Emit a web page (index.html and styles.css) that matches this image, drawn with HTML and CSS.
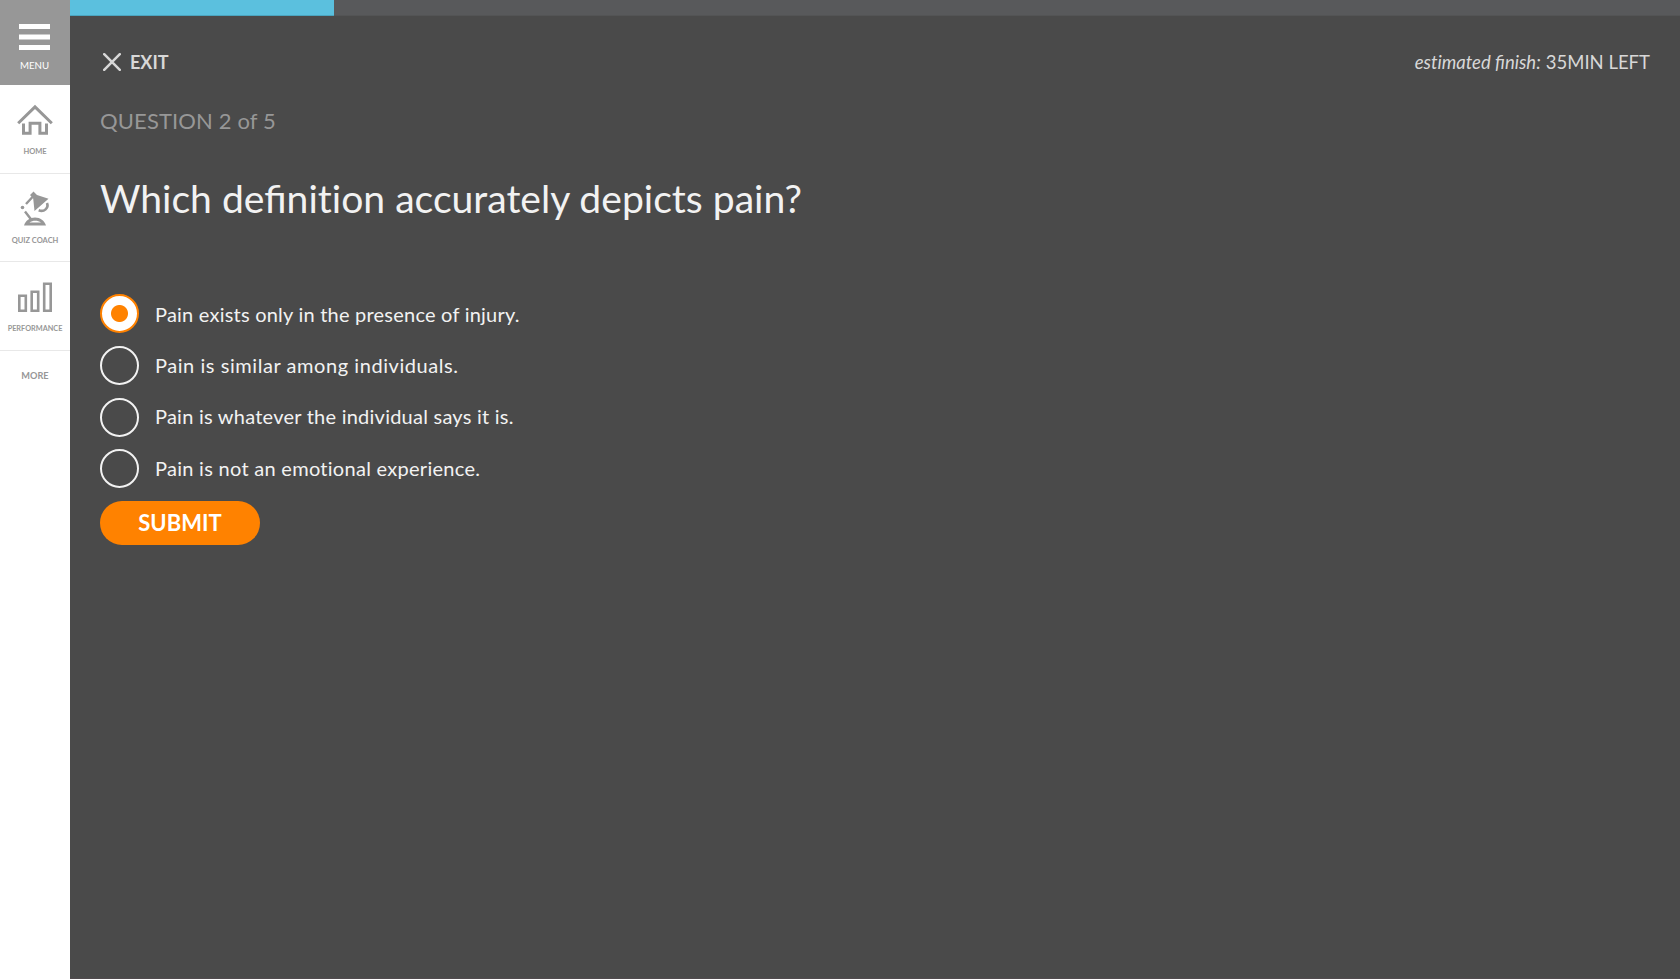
FILE: index.html
```html
<!DOCTYPE html>
<html lang="en">
<head>
<meta charset="utf-8">
<title>Quiz</title>
<link rel="stylesheet" href="styles.css">
</head>
<body>
<div class="app">
  <nav class="sidebar">
    <div class="menu">
      <svg class="menu-icon" width="31" height="27" viewBox="0 0 31 27"><path d="M0 0h31v5H0zM0 10.500h31v5H0zM0 21h31v5H0z" fill="#fff"/></svg>
      <span class="menu-label">MENU</span>
    </div>
    <div class="item">
      <svg class="item-icon" width="36" height="32" viewBox="0 0 36 32" fill="none" stroke="#979797" stroke-width="3"><path d="M1.200 19.300 18 2.900l16.800 16.400"/><path d="M6.500 19.500v9.700h6.600v-9.900h9.800v9.900h6.600v-9.700"/></svg>
      <span class="label home">HOME</span>
    </div>
    <div class="item item-coach">
      <svg class="item-icon" width="36" height="36" viewBox="0 0 36 36" fill="#979797"><path d="m13 4 3.500-3.500L20 4l11.500 3.800L17.500 20l-1.300-12.500z"/><g fill="none" stroke="#979797" stroke-width="2.400"><path d="M15.500 6 9 13M8 20.500l5.800 7.500"/><path d="M30 12c2 5-3 9.500-8.300 7.300" stroke-width="2.600"/></g><circle cx="5.500" cy="16.500" r="1.800"/><path fill-rule="evenodd" d="M7 34.500c1.500-4.800 5.800-8 11-8s9.500 3.200 11 8zM12.500 31.500H24c-3.200-2.300-8.300-2.300-11.500 0z"/></svg>
      <span class="label coach">QUIZ COACH</span>
    </div>
    <div class="item">
      <svg class="item-icon" width="36" height="32" viewBox="0 0 36 32" fill="none" stroke="#979797" stroke-width="2.600"><path d="M2.300 14.800h6.500v15H2.300zM14.700 10.800h6.500v19h-6.500zM27.200 2.800h6.500v27h-6.500z"/></svg>
      <span class="label performance">PERFORMANCE</span>
    </div>
    <div class="more">MORE</div>
  </nav>
  <main class="main">
    <div class="progress"><div class="progress-fill"></div></div>
    <div class="content">
      <header class="top">
        <div class="exit">
          <svg width="18" height="18" viewBox="0 0 18 18" stroke="#d8d8d8" stroke-width="2.500" stroke-linecap="round"><path d="m1.200 1.200 15.600 15.600M16.800 1.200 1.200 16.800"/></svg>
          <span class="exit-label">EXIT</span>
        </div>
        <div class="estimate"><em class="estimate-name">es&zwnj;t&zwnj;imated finish:</em><span class="estimate-time">35MIN LEFT</span></div>
      </header>
      <div class="counter">QUESTION 2 of 5</div>
      <h1 class="question">Which definit&zwnj;ion accurately depicts pain?</h1>
      <div class="options">
        <div class="option"><span class="radio selected"></span><span class="text t1">Pain exists only in the presence of injury.</span></div>
        <div class="option"><span class="radio"></span><span class="text t2">Pain is similar among individuals.</span></div>
        <div class="option"><span class="radio"></span><span class="text t3">Pain is whatever the individual says it is.</span></div>
        <div class="option last"><span class="radio"></span><span class="text t4">Pain is not an emotional experience.</span></div>
      </div>
      <button class="submit">SUBMIT</button>
    </div>
  </main>
</div>
</body>
</html>
```
FILE: styles.css
```css
* { box-sizing: border-box; }
body { margin: 0; font-family: Lato, sans-serif; background: #4a4a4a; white-space: nowrap; }
.app { display: flex; height: 979px; overflow: hidden; }
.sidebar { width: 70px; background: #fff; color: #979797; display: flex; flex-direction: column; }
.menu { height: 85px; background: #979797; display: flex; flex-direction: column; align-items: center; padding: 24px 1px 0 0; color: #fff; }
.menu-label { font-size: 9.700px; line-height: 12px; margin-top: 8px; }
.item { height: 89px; border-bottom: 1px solid #e8e8e8; display: flex; flex-direction: column; align-items: center; padding-top: 19px; }
.item-coach { height: 88px; padding-top: 17px; }
.item-icon { flex: none; }
.label { font-size: 7.500px; line-height: 10px; font-weight: 700; margin-top: 11px; }
.coach { margin-top: 9px; }
.performance { font-size: 7.300px; }
.more { font-size: 9.200px; line-height: 12px; font-weight: 700; text-align: center; margin-top: 19px; }
.main { flex: 1; display: flex; flex-direction: column; border-bottom: 1px solid #514b4e; }
.progress { height: 16px; background: #58595b; border-bottom: 1px solid #535455; }
.progress-fill { width: 264px; height: 16px; background: #5bc0de; border-bottom: 1px solid #4ba5bf; }
.content { padding: 34px 30px 0; display: flex; flex-direction: column; align-items: flex-start; }
.top { align-self: stretch; height: 24px; display: flex; justify-content: space-between; align-items: center; color: #d8d8d8; }
.exit { display: flex; align-items: center; gap: 9px; padding-left: 3px; }
.exit-label { font-size: 18px; line-height: 24px; font-weight: 700; }
.estimate { display: flex; gap: 5px; font-size: 18.500px; line-height: 24px; }
.counter { font-size: 22px; line-height: 30px; letter-spacing: 0.130px; color: #979797; margin-top: 32px; }
.question { font-size: 39.100px; line-height: 50px; font-weight: 400; color: #f2f2f2; margin: 37px 0 0; }
.options { display: flex; flex-direction: column; gap: 13px; margin-top: 71px; }
.option { display: flex; align-items: center; gap: 16px; height: 39px; color: #f2f2f2; }
.option.last { margin-top: -1px; }
.radio { width: 39px; height: 39px; border: 2px solid #f2f2f2; border-radius: 50%; }
.selected { border-color: #ff8200; background: radial-gradient(circle, #ff8200 8px, #fff 9px); }
.text { font-size: 20px; line-height: 39px; }
.t1 { letter-spacing: 0.220px; padding-top: 2px; }
.t2 { letter-spacing: 0.560px; }
.t3 { letter-spacing: 0.240px; padding-bottom: 2px; }
.t4 { letter-spacing: 0.280px; }
.submit { width: 160px; height: 44px; border: 0; border-radius: 22px; background: #ff8200; color: #fff; font: 700 22px/44px Lato, sans-serif; margin-top: 13px; padding: 0; }
```
